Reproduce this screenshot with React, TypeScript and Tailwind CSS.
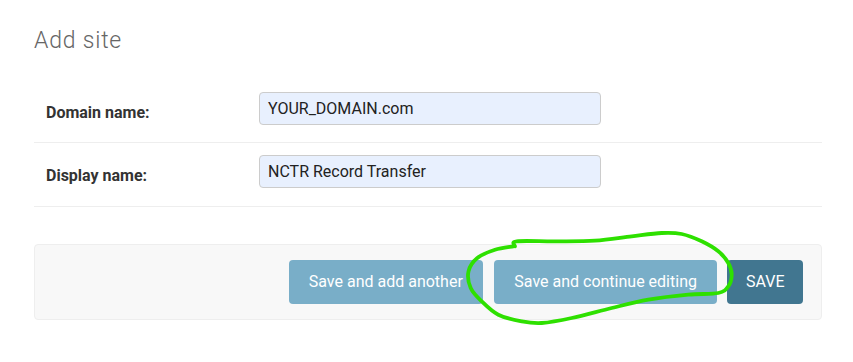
import React from "react";

const pts: [number, number][] = [
  [515, 246.3],
  [516.7, 241.3],
  [555, 241.3],
  [595, 240.7],
  [631.7, 236.3],
  [661.7, 233],
  [681.7, 234],
  [701.7, 241.3],
  [718.3, 251.3],
  [728.3, 263],
  [731.7, 274.7],
  [728.3, 286.3],
  [718.3, 293],
  [688.3, 294.7],
  [648.3, 299.7],
  [611.7, 308],
  [571.7, 318],
  [541.7, 323],
  [521.7, 321.3],
  [498.3, 314.7],
  [481.7, 301.3],
  [470.7, 288],
  [468.5, 271.3],
  [477.3, 258],
  [495, 249.7],
  [513.3, 246.3],
];

function smoothPath(p: [number, number][]): string {
  let d = `M ${p[0][0]} ${p[0][1]}`;
  for (let i = 0; i < p.length - 1; i++) {
    const p0 = p[i - 1] || p[i];
    const p1 = p[i];
    const p2 = p[i + 1];
    const p3 = p[i + 2] || p2;
    const c1x = p1[0] + (p2[0] - p0[0]) / 6;
    const c1y = p1[1] + (p2[1] - p0[1]) / 6;
    const c2x = p2[0] - (p3[0] - p1[0]) / 6;
    const c2y = p2[1] - (p3[1] - p1[1]) / 6;
    d += ` C ${c1x.toFixed(1)} ${c1y.toFixed(1)} ${c2x.toFixed(1)} ${c2y.toFixed(1)} ${p2[0]} ${p2[1]}`;
  }
  return d;
}

function Row({ label, value, first }: { label: string; value: string; first?: boolean }) {
  return (
    <div
      className={
        first
          ? "flex border-b border-[#eeeeee] pl-[12px] pt-[13px] pb-[17px]"
          : "flex border-b border-[#eeeeee] pl-[12px] pt-[12px] pb-[18px]"
      }
    >
      <div className="w-[213px] pt-[11px] text-[16px] leading-[20px] font-bold text-[#333333]">
        {label}
      </div>
      <div className="flex h-[33px] w-[342px] items-center rounded-[4px] border border-[#cccccc] bg-[#e8f0fe] px-[8px] text-[16px] text-[#222222]">
        {value}
      </div>
    </div>
  );
}

export default function App() {
  return (
    <div className="relative h-[362px] w-[853px] overflow-hidden bg-white font-['Roboto',sans-serif]">
      <div className="w-[788px] ml-[34px] pt-[28px]">
        <h1 className="text-[23px] leading-[26px] font-light tracking-[0.8px] text-[#666666]">Add site</h1>
        <div className="mt-[25px]">
          <Row label="Domain name:" value="YOUR_DOMAIN.com" first />
          <Row label="Display name:" value="NCTR Record Transfer" />
        </div>
        <div className="mt-[37px] flex justify-end rounded-[4px] border border-[#eeeeee] bg-[#f8f8f8] py-[15px] pr-[18px]">
          <button className="h-[44px] rounded-[4px] bg-[#79aec8] px-[20px] text-[16px] text-white">
            Save and add another
          </button>
          <button className="ml-[11px] h-[44px] rounded-[4px] bg-[#79aec8] px-[20.5px] text-[16px] text-white">
            Save and continue editing
          </button>
          <button className="ml-[10px] h-[44px] rounded-[4px] bg-[#417690] px-[18.5px] text-[16px] text-white">
            SAVE
          </button>
        </div>
      </div>
      <svg className="pointer-events-none absolute left-0 top-0" width="853" height="362" viewBox="0 0 853 362">
        <path
          d={smoothPath(pts)}
          fill="none"
          stroke="#2ee000"
          strokeWidth="3.8"
          strokeLinecap="round"
          strokeLinejoin="round"
        />
      </svg>
    </div>
  );
}
